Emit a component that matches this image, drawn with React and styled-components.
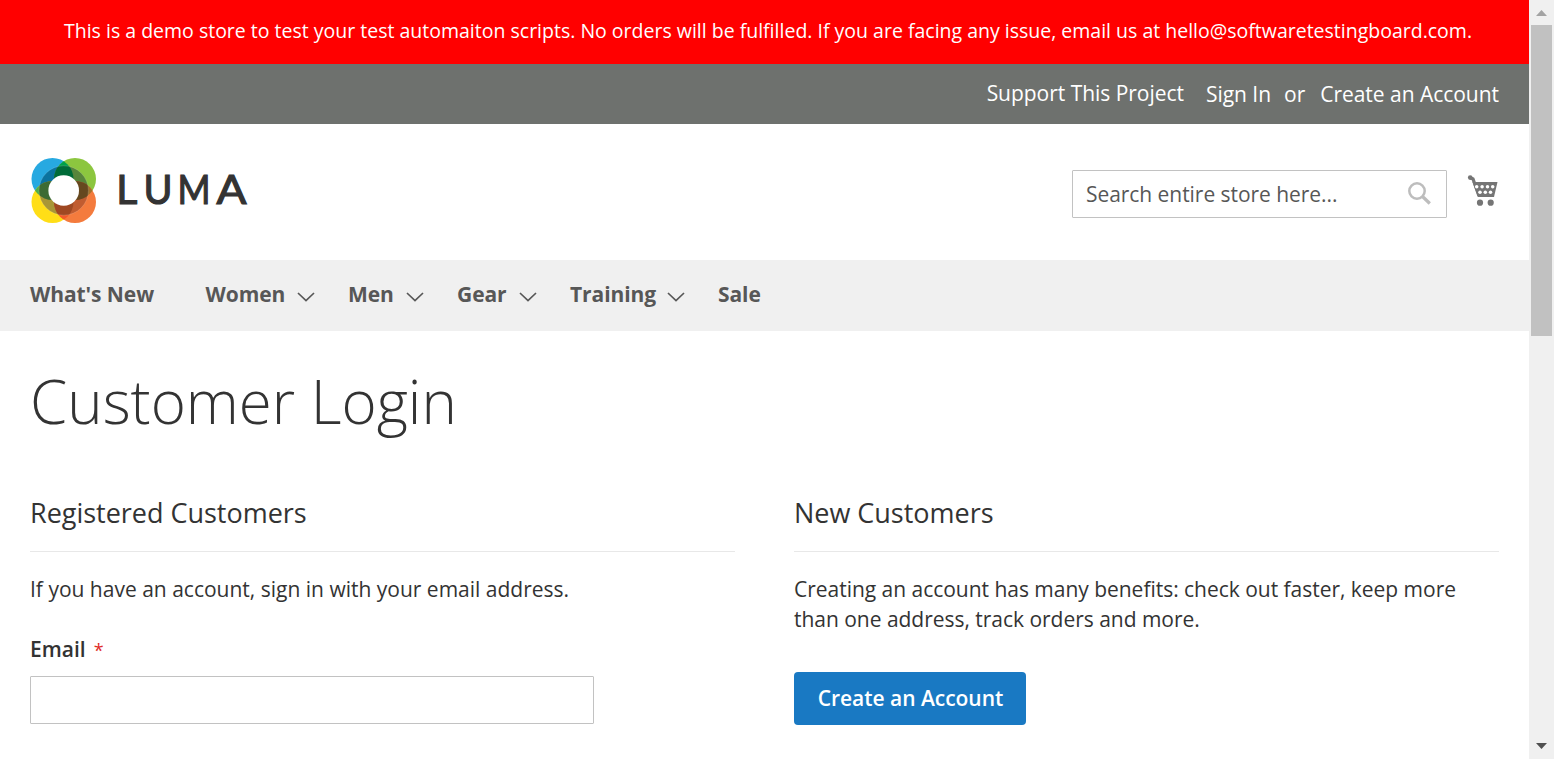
import React from 'react';
import styled, { createGlobalStyle } from 'styled-components';

const GlobalStyle = createGlobalStyle`
  * { box-sizing: border-box; }
  body { margin: 0; background: #fff; overflow: hidden; }
  h1, h2, p { margin: 0; }
`;
const Window = styled.div`
  display: flex;
  width: 1554px;
  height: 759px;
  overflow: hidden;
  color: #333;
  font: 400 21px/30px "Open Sans", "Noto Sans", sans-serif;
`;
const Page = styled.div`
  width: 1529px;
  background: #fff;
`;
const Notice = styled.p`
  height: 64px;
  padding: 16px 0 0 64px;
  background: #f00;
  color: #fff;
  font-size: 19.5px;
  white-space: nowrap;
`;
const TopPanel = styled.div`
  display: flex;
  justify-content: flex-end;
  height: 60px;
  padding: 14px 30px 0 0;
  background: #6e716e;
  color: #fff;
`;
const TopText = styled.span`
  margin-left: ${(p) => p.$gap}px;
  padding-top: ${(p) => p.$drop || 0}px;
  letter-spacing: -0.03px;
  white-space: nowrap;
`;
const Header = styled.header`
  display: flex;
  justify-content: space-between;
  height: 136px;
  padding: 30px 30px 0;
`;
const Logo = styled.svg`
  display: block;
  font: 400 40px Lato, sans-serif;
`;
const Tools = styled.div`
  display: flex;
  padding-top: 16px;
`;
const SearchBox = styled.div`
  display: flex;
  justify-content: space-between;
  width: 375px;
  height: 48px;
  padding: 8px 14px 0 13px;
  border: 1px solid #c2c2c2;
  border-radius: 1px;
  color: #575757;
`;
const Placeholder = styled.span`
  letter-spacing: -0.05px;
`;
const SearchIcon = styled.svg`
  margin-top: 2px;
`;
const CartIcon = styled.svg`
  margin: 4px 0 0 20px;
`;
const Nav = styled.nav`
  display: flex;
  height: 71px;
  padding: 19px 30px 0;
  background: #f0f0f0;
  color: #575757;
  font-weight: 700;
`;
const NavItem = styled.span`
  display: flex;
  width: ${(p) => p.$width}px;
  letter-spacing: -0.08px;
  white-space: nowrap;
`;
const Chevron = styled.svg`
  margin: 12px 33px 0 auto;
`;
const Main = styled.main`
  padding: 37px 30px 0;
`;
const Title = styled.h1`
  height: 122px;
  font-size: 60px;
  font-weight: 300;
  line-height: 66px;
`;
const Columns = styled.div`
  display: grid;
  grid-template-columns: 705px 705px;
  column-gap: 59px;
`;
const BlockTitle = styled.h2`
  height: 62px;
  margin-bottom: 22px;
  padding-top: 8px;
  border-bottom: 1px solid #e8e8e8;
  font-size: 27px;
  font-weight: 400;
  line-height: 30px;
  letter-spacing: -0.02px;
`;
const Copy = styled.p`
  white-space: nowrap;
  letter-spacing: ${(p) => p.$track || 0}px;
`;
const Label = styled.label`
  display: block;
  margin: 30px 0 11px;
  font-weight: 600;
`;
const Required = styled.span`
  margin-left: 8px;
  color: #e02b27;
  font-size: 18px;
  font-weight: 400;
`;
const Field = styled.input`
  display: block;
  width: 564px;
  height: 48px;
  border: 1px solid #c2c2c2;
  border-radius: 1px;
`;
const Button = styled.button`
  width: 232px;
  height: 53px;
  margin-top: 38px;
  padding: 0 0 1px 1px;
  border: 0;
  border-radius: 4px;
  background: #1979c3;
  color: #fff;
  font: 600 21px/30px "Open Sans", "Noto Sans", sans-serif;
  letter-spacing: -0.03px;
`;
const Scrollbar = styled.div`
  display: flex;
  flex-direction: column;
  align-items: center;
  width: 25px;
  height: 759px;
  background: #f0f0f0;
`;
const Thumb = styled.div`
  width: 21px;
  height: 311px;
  margin-bottom: 398px;
  background: #c1c1c1;
`;

const circles = [
  { id: 'blue', cx: 22.5, cy: 25, fill: '#27a9e1', inner: '#0b739f' },
  { id: 'green', cx: 45, cy: 25, fill: '#8cc63f', inner: '#57853b' },
  { id: 'yellow', cx: 22.5, cy: 48, fill: '#ffde17', inner: '#a89636' },
  { id: 'orange', cx: 45, cy: 48, fill: '#f47b3d', inner: '#c15c30' },
];
const overlaps = [
  ['blue', 'green', '#00a14b', '#006b38'],
  ['blue', 'yellow', '#4fae48', '#3d6b33'],
  ['green', 'orange', '#a3722b', '#66481f'],
  ['yellow', 'orange', '#f15a29', '#9f4822'],
];
const wordmark = [
  ['L', 86.2, 21],
  ['U', 113.5, 29],
  ['M', 147.6, 33],
  ['A', 186.4, 30],
];

function LumaLogo() {
  const at = (id) => circles.find((c) => c.id === id);
  const petals = (inner) => (
    <>
      {circles.map((c) => (
        <circle key={c.id} cx={c.cx} cy={c.cy} r="21" fill={inner ? c.inner : c.fill} />
      ))}
      {overlaps.map(([a, b, outer, dark]) => (
        <g key={a + b} clipPath={`url(#${a})`}>
          <circle cx={at(b).cx} cy={at(b).cy} r="21" fill={inner ? dark : outer} />
        </g>
      ))}
    </>
  );
  return (
    <Logo width="220" height="76" viewBox="0 0 220 76">
      <defs>
        {circles.map((c) => (
          <clipPath key={c.id} id={c.id}><circle cx={c.cx} cy={c.cy} r="21" /></clipPath>
        ))}
        <clipPath id="ring"><circle cx="33.7" cy="36.5" r="24.7" /></clipPath>
      </defs>
      {petals(false)}
      <g clipPath="url(#ring)">{petals(true)}</g>
      <circle cx="33.7" cy="36.5" r="24.7" fill="none" stroke="#fff" strokeOpacity=".25" strokeWidth=".6" />
      <circle cx="33.7" cy="36.5" r="15.3" fill="#fff" />
      <text y="50" fill="#333" stroke="#333" strokeWidth="1.2">
        {wordmark.map(([letter, x, length]) => (
          <tspan key={letter} x={x} textLength={length} lengthAdjust="spacingAndGlyphs">{letter}</tspan>
        ))}
      </text>
    </Logo>
  );
}

function Arrow({ up }) {
  return (
    <svg width="25" height="25" viewBox="0 0 25 25">
      {up ? <path d="M7 16h11l-5.500-6z" fill="#a3a3a3" /> : <path d="M7 9h11l-5.500 6z" fill="#505050" />}
    </svg>
  );
}

const items = [
  ["What's New", 175.5, false],
  ['Women', 142.5, true],
  ['Men', 109, true],
  ['Gear', 113, true],
  ['Training', 148, true],
  ['Sale', 60, false],
];

export default function App() {
  return (
    <>
      <GlobalStyle />
      <Window>
        <Page>
          <Notice>This is a demo store to test your test automaiton scripts. No orders will be fulfilled. If you are facing any issue, email us at hello@softwaretestingboard.com.</Notice>
          <TopPanel>
            <TopText $gap={0}>Support This Project</TopText>
            <TopText $gap={22} $drop={1}>Sign In</TopText>
            <TopText $gap={13} $drop={1}>or</TopText>
            <TopText $gap={15} $drop={1}>Create an Account</TopText>
          </TopPanel>
          <Header>
            <LumaLogo />
            <Tools>
              <SearchBox>
                <Placeholder>Search entire store here...</Placeholder>
                <SearchIcon width="24" height="24" viewBox="0 0 24 24" fill="none" stroke="#bdbdbd">
                  <circle cx="9" cy="10" r="7.7" strokeWidth="2.5" />
                  <path d="M14.500 15.500l7.300 7" strokeWidth="3.200" />
                </SearchIcon>
              </SearchBox>
              <CartIcon width="32" height="34" viewBox="0 0 32 34" fill="#757575">
                <path d="M3 3.500L6 5l6 17" fill="none" stroke="#757575" strokeWidth="3.200" />
                <circle cx="3.200" cy="3.600" r="2.300" />
                <path d="M5.500 8h25l-3.500 15H11z" />
                <g fill="#fff">
                  {[9.7, 15.1, 20.5, 25.700].map((x) => <circle key={x} cx={x} cy="12.800" r="1.750" />)}
                  {[13, 18.3, 23.500].map((x) => <circle key={x} cx={x} cy="18.200" r="1.750" />)}
                </g>
                <circle cx="13" cy="28.700" r="3.100" />
                <circle cx="23.700" cy="28.700" r="3.100" />
              </CartIcon>
            </Tools>
          </Header>
          <Nav>
            {items.map(([name, width, menu]) => (
              <NavItem key={name} $width={width}>
                {name}
                {menu && (
                  <Chevron width="18" height="12" viewBox="0 0 18 12">
                    <path d="M1 2l8 7.500 8-7.500" fill="none" stroke="#575757" strokeWidth="1.700" />
                  </Chevron>
                )}
              </NavItem>
            ))}
          </Nav>
          <Main>
            <Title>Customer Login</Title>
            <Columns>
              <section>
                <BlockTitle>Registered Customers</BlockTitle>
                <Copy>If you have an account, sign in with your email address.</Copy>
                <Label htmlFor="email">Email<Required>*</Required></Label>
                <Field id="email" />
              </section>
              <section>
                <BlockTitle>New Customers</BlockTitle>
                <Copy $track={-0.025}>Creating an account has many benefits: check out faster, keep more<br />than one address, track orders and more.</Copy>
                <Button>Create an Account</Button>
              </section>
            </Columns>
          </Main>
        </Page>
        <Scrollbar>
          <Arrow up />
          <Thumb />
          <Arrow />
        </Scrollbar>
      </Window>
    </>
  );
}
